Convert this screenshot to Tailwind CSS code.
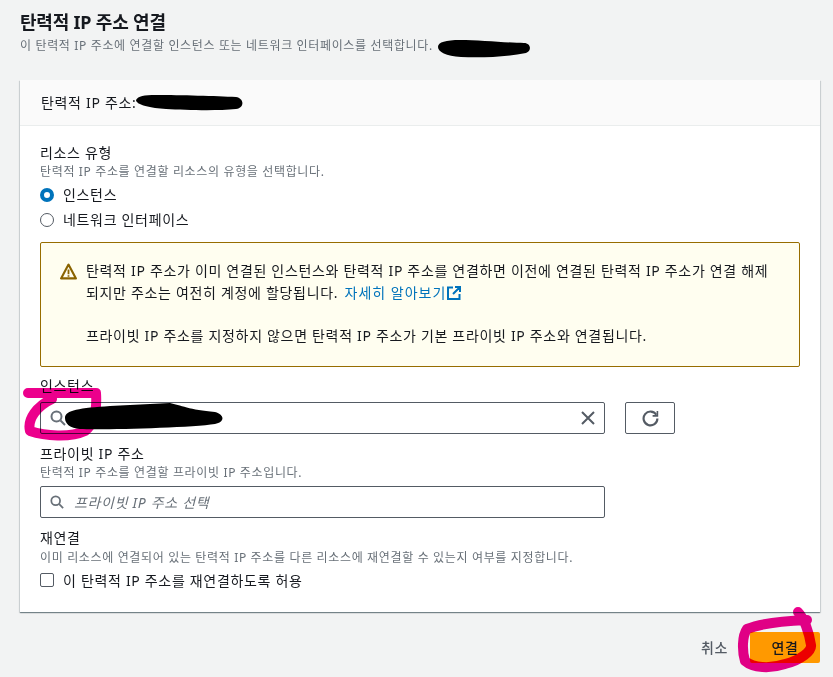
<!DOCTYPE html>
<html lang="ko">
<head>
    <meta charset="UTF-8">
    <title>탄력적 IP 주소 연결</title>
    <script src="https://cdn.jsdelivr.net/npm/@tailwindcss/browser@4"></script>
</head>
<body class="bg-[#f2f3f3] font-['Noto_Sans','Noto_Sans_CJK_KR',sans-serif] tracking-[0.68px] text-[#16191f]">
<div class="relative h-[677px] w-[833px] overflow-hidden">
    <!-- Page header -->
    <div class="h-[80px] pl-[20px] pt-[9px]">
        <h1 class="h-[26px] text-[18px] leading-[26px] font-bold tracking-[-0.2px]">탄력적 IP 주소 연결</h1>
        <p class="mt-[2px] flex h-[18px] items-center text-[12px] leading-[18px] tracking-[0.65px] text-[#687078]">이 탄력적 IP 주소에 연결할 인스턴스 또는 네트워크 인터페이스를 선택합니다.</p>
    </div>

    <!-- Card -->
    <div class="mx-[20px] h-[532px] w-[800px] bg-white shadow-[0_1px_1px_0_rgba(0,28,36,0.4),1px_1px_1px_0_rgba(0,28,36,0.1),-1px_1px_1px_0_rgba(0,28,36,0.1)]">
        <div class="flex h-[46px] items-center border-b border-[#eaeded] bg-[#fafafa] px-[21px] text-[14px]">탄력적 IP 주소:</div>
        <div class="px-[20px] pt-[17px]">
            <div class="h-[20px] text-[14px] leading-[20px]">리소스 유형</div>
            <div class="h-[18px] text-[12px] leading-[18px] tracking-[0.65px] text-[#687078]">탄력적 IP 주소를 연결할 리소스의 유형을 선택합니다.</div>

            <div class="mt-[1px] flex h-[25px] items-center gap-[9px] text-[14px]">
                <span class="h-[14px] w-[14px] rounded-full border-[4px] border-[#0073bb] bg-white"></span>
                <span>인스턴스</span>
            </div>
            <div class="flex h-[25px] items-center gap-[9px] text-[14px]">
                <span class="h-[14px] w-[14px] rounded-full border border-[#545b64] bg-white"></span>
                <span>네트워크 인터페이스</span>
            </div>

            <!-- Warning alert -->
            <div class="mt-[10px] h-[125px] rounded-[2px] border border-[#976d00] bg-[#fffef0] pt-[17px] pl-[19px] text-[14px] leading-[22px]">
                <div class="flex gap-[9px]">
                    <svg class="mt-[3px] h-[17px] w-[17px] shrink-0" viewBox="0 0 16 16">
                        <path d="M8 1.500 1 14.500h14z" fill="none" stroke="#8a6300" stroke-width="2" stroke-linejoin="round"/>
                        <path d="M8 6v4.500M8 11.500v1.500" stroke="#8a6300" stroke-width="1.700"/>
                    </svg>
                    <div class="w-[700px]">
                        <div class="whitespace-nowrap">탄력적 IP 주소가 이미 연결된 인스턴스와 탄력적 IP 주소를 연결하면 이전에 연결된 탄력적 IP 주소가 연결 해제</div>
                        <div class="flex items-center whitespace-nowrap">되지만 주소는 여전히 계정에 할당됩니다.&nbsp;<span class="ml-[2px] tracking-[1px] text-[#0073bb]">자세히 알아보기</span>
                            <svg class="ml-[1px] h-[14px] w-[14px]" viewBox="0 0 14 14" fill="none" stroke="#0073bb" stroke-width="2">
                                <path d="M6 1.500H1v11.500h11.500V8M8 1h5v5M13 1 6 8"/>
                            </svg>
                        </div>
                        <div class="mt-[21px] whitespace-nowrap">프라이빗 IP 주소를 지정하지 않으면 탄력적 IP 주소가 기본 프라이빗 IP 주소와 연결됩니다.</div>
                    </div>
                </div>
            </div>

            <!-- Instance -->
            <div class="mt-[9px] h-[20px] text-[14px] leading-[20px]">인스턴스</div>
            <div class="mt-[6px] flex gap-[20px]">
                <div class="flex h-[32px] w-[565px] items-center justify-between rounded-[2px] border border-[#545b64] bg-white pr-[8px] pl-[9px]">
                    <svg class="h-[16px] w-[16px]" viewBox="0 0 16 16" fill="none" stroke="#687078" stroke-width="2">
                        <circle cx="6.500" cy="6.500" r="5"/>
                        <path d="m10.500 10.500 4.500 4.500"/>
                    </svg>
                    <svg class="h-[16px] w-[16px]" viewBox="0 0 16 16" fill="none" stroke="#545b64" stroke-width="2">
                        <path d="m2 2 12 12M14 2 2 14"/>
                    </svg>
                </div>
                <button class="flex h-[32px] w-[50px] items-center justify-center rounded-[2px] border border-[#545b64] bg-white">
                    <svg class="h-[17px] w-[17px]" viewBox="0 0 16 16" fill="none" stroke="#545b64" stroke-width="2">
                        <path d="M13.500 4.500A6.500 6.500 0 1 0 14.500 8"/>
                        <path d="M14.500 1v4.500H10" stroke-width="1.500"/>
                    </svg>
                </button>
            </div>

            <!-- Private IP -->
            <div class="mt-[10px] h-[20px] text-[14px] leading-[20px]">프라이빗 IP 주소</div>
            <div class="h-[18px] text-[12px] leading-[18px] tracking-[0.65px] text-[#687078]">탄력적 IP 주소를 연결할 프라이빗 IP 주소입니다.</div>
            <div class="mt-[4px] flex h-[32px] w-[565px] items-center gap-[10px] rounded-[2px] border border-[#545b64] bg-white pl-[9px]">
                <svg class="h-[14px] w-[14px]" viewBox="0 0 16 16" fill="none" stroke="#687078" stroke-width="2">
                    <circle cx="6.500" cy="6.500" r="5"/>
                    <path d="m10.500 10.500 4.500 4.500"/>
                </svg>
                <span class="text-[14px] text-[#687078] italic">프라이빗 IP 주소 선택</span>
            </div>

            <!-- Reconnect -->
            <div class="mt-[10px] h-[21px] text-[14px] leading-[20px]">재연결</div>
            <div class="h-[18px] text-[12px] leading-[18px] tracking-[0.65px] text-[#687078]">이미 리소스에 연결되어 있는 탄력적 IP 주소를 다른 리소스에 재연결할 수 있는지 여부를 지정합니다.</div>
            <div class="mt-[1px] flex h-[24px] items-center gap-[9px] text-[14px]">
                <span class="h-[14px] w-[14px] rounded-[2px] border border-[#545b64] bg-white"></span>
                <span>이 탄력적 IP 주소를 재연결하도록 허용</span>
            </div>
        </div>
    </div>

    <!-- Footer -->
    <div class="mt-[20px] flex h-[31px] items-center justify-end pr-[13px]">
        <span class="mr-[22px] text-[14px] font-medium text-[#545b64]">취소</span>
        <button class="h-[31px] w-[70px] rounded-[2px] bg-[#ff9900] text-[14px] font-medium text-[#16191f]">연결</button>
    </div>

    <!-- Redaction scribbles drawn over the screenshot -->
    <svg class="pointer-events-none absolute top-0 left-0" width="833" height="677" viewBox="0 0 833 677">
        <path d="M438 47c0-5 8-7 22-7 20 0 50 3 64 3 7 0 8 8 2 10-20 4-45 5-65 4-15-1-23-5-23-10z" fill="#000"/>
        <path d="M136 100c2-4 8-5 20-5 25 0 60 1 80 2 8 1 9 11 0 12-20 2-50 1-70 0-15-1-30-4-30-9z" fill="#000"/>
        <path d="M65 418c0-8 15-10 45-12l60-3c10 2 20 7 45 9 10 3 10 10 0 12-25 4-115 6-135 5-10-1-15-5-15-11z" fill="#000"/>
    </svg>

    <!-- Highlighter marks, they darken whatever is under them -->
    <svg class="pointer-events-none absolute top-0 left-0 mix-blend-multiply" width="833" height="677" viewBox="0 0 833 677" fill="none" stroke="#ec008c" stroke-width="10" stroke-linecap="round" stroke-linejoin="round">
        <path d="M28 393H96c1 15-1 30-11 38-15 7-40 5-55 0-3-12 7-25 22-32"/>
        <path d="M798 612c6 6 11 20 13 33 1 6-10 15-26 19-15 5-32 4-40-3-3-10-3-25 2-32 15-6 35-8 60-9"/>
    </svg>
</div>
</body>
</html>
